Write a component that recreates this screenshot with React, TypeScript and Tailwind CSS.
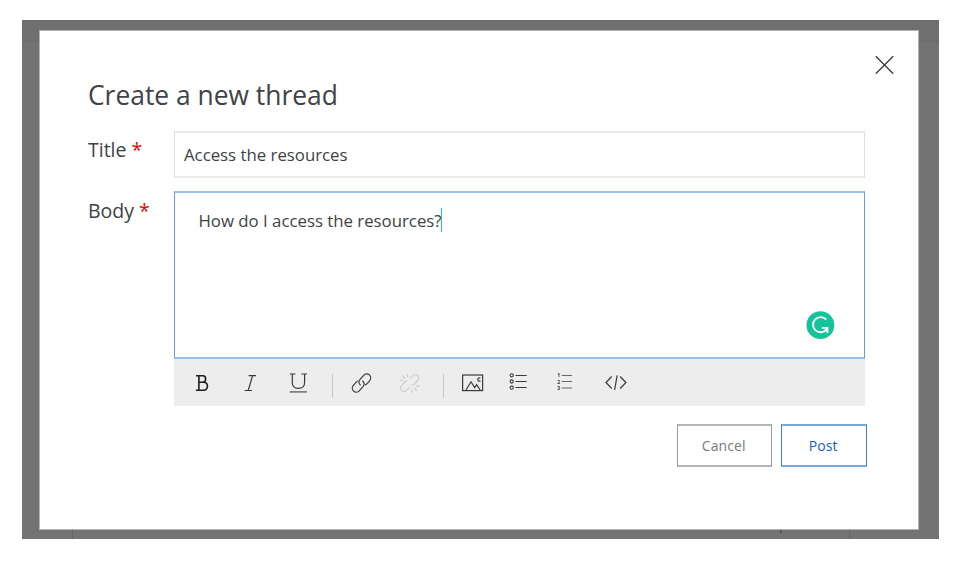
import React from "react";

type IconProps = { children: React.ReactNode; w: number; className?: string; label: string };

function ToolIcon({ children, w, className = "", label }: IconProps) {
  return (
    <button aria-label={label} className={"block h-6 shrink-0 " + className}>
      <svg width={w} height="24" viewBox={`0 0 ${w} 24`} fill="none" stroke="#3a3a3a" strokeWidth="1.1">
        {children}
      </svg>
    </button>
  );
}

function Toolbar() {
  return (
    <div className="flex h-[47px] w-[691px] items-start bg-[#ededed] pt-[12px]">
      <ToolIcon label="Bold" w={14} className="ml-[21px]">
        <path d="M1 4.8H7.8C11.6 4.8 11.6 11.2 7.8 11.2H4.2M7.8 11.2H8.6C13.7 11.2 13.7 19.2 8.6 19.2H1M3.9 4.8V19.2" stroke="#1f1f1f" strokeWidth="1.6" />
      </ToolIcon>
      <ToolIcon label="Italic" w={14} className="ml-[35px]">
        <path d="M4.6 4.6H12M.6 19.5H8M8.6 4.6L4.2 19.5" strokeWidth="1.2" />
      </ToolIcon>
      <ToolIcon label="Underline" w={18} className="ml-[31px]">
        <path d="M.9 3H6.4M12.4 3H18M3.3 3V11.5C3.3 15.3 5.6 17.4 9.4 17.4S15.6 15.3 15.6 11.5V3" strokeWidth="1.2" />
        <path d="M.7 20.9H18" stroke="#777" strokeWidth="1.6" />
      </ToolIcon>
      <span className="mt-[3px] ml-[25px] h-6 w-px bg-[#c8c8c8]" />
      <ToolIcon label="Insert link" w={21} className="ml-[18px]">
        <g strokeWidth="1.2" transform="translate(.4 0)">
          <path d="M9.2 14.2C7 12.6 7 10 8.7 8.3L12.3 4.3C13.9 2.5 16.4 2.4 18 3.9S19.7 8 18.2 9.8L15.4 12.8C14.9 13.3 14.3 13.7 13.6 13.9" />
          <path d="M11 9.7C13.2 11.3 13.2 14 11.6 15.7L7.9 19.8C6.3 21.5 3.8 21.6 2.2 20.1S.5 16 2 14.3L4.9 11.1C5.4 10.6 6 10.2 6.6 10" />
        </g>
      </ToolIcon>
      <ToolIcon label="Remove link" w={22} className="ml-[27px]">
        <g stroke="#cdcdcd" strokeWidth="1.2">
          <path d="M11 7.7L13.7 4.8C15 3.2 17.2 3.1 18.6 4.4S20 8 18.6 9.5L15.2 13.1C14.4 13.9 13.5 14.1 12.6 13.8" />
          <path d="M8.4 10.2C7.4 9.8 6.5 10.2 5.7 11L2.6 14.4C1.1 15.9 1.2 18.2 2.6 19.6S6.2 20.9 7.6 19.4L10.5 16.4" />
          <path d="M8 2.5L8.8 6.2M3.2 4.2L6.1 7.5M.9 9L4.5 9.5M17 14.7L20.6 15.3M15.1 17L18.1 20M12.5 18.3L13.2 21.6" />
        </g>
      </ToolIcon>
      <span className="mt-[3px] ml-[22px] h-6 w-px bg-[#c8c8c8]" />
      <ToolIcon label="Insert image" w={22} className="ml-[18px]">
        <rect x=".6" y="4" width="20" height="15.6" strokeWidth="1.2" />
        <path d="M4 19L9 10.8L12.7 16.6L14.6 13.7L18.2 19M18.4 7.3C17.3 6.4 15.8 7 15.8 8.5S17.3 10.6 18.4 9.7" strokeWidth="1.2" />
      </ToolIcon>
      <ToolIcon label="Bulleted list" w={18} className="ml-[25px]">
        <circle cx="2.7" cy="4.3" r="1.6" />
        <circle cx="2.7" cy="10.5" r="1.6" />
        <circle cx="2.7" cy="16.7" r="1.6" />
        <path d="M6.5 4.5H17.6M6.5 10.5H17.6M6.5 16.5H17.6" />
      </ToolIcon>
      <ToolIcon label="Numbered list" w={16} className="ml-[30px]">
        <g fill="#333" stroke="none" fontFamily="Open Sans, sans-serif" fontSize="5" fontWeight="700">
          <text x=".2" y="6.4">1</text>
          <text x=".2" y="12.8">2</text>
          <text x=".2" y="19.2">3</text>
        </g>
        <path d="M4.8 4.5H15M4.8 10.5H15M4.8 17H15" stroke="#666" />
      </ToolIcon>
      <ToolIcon label="Code" w={22} className="ml-[32px]">
        <path d="M6.7 5.5L1 11.5L6.7 17.5M15.2 5.5L20.9 11.5L15.2 17.5M12.2 4.4L9.6 18.8" strokeWidth="1.2" />
      </ToolIcon>
    </div>
  );
}

function AssistantBadge() {
  return (
    <svg className="absolute right-[29px] bottom-[17px]" width="29" height="29" viewBox="0 0 29 29" fill="none">
      <circle cx="14.4" cy="14.2" r="13.9" fill="#15c39a" />
      <path d="M20.2 8.5A7.6 7.6 0 1 0 20.6 18.4M15.8 16.9H21.4V22" stroke="#fff" strokeWidth="1.9" />
    </svg>
  );
}

function Label({ children }: { children: React.ReactNode }) {
  return (
    <label className="w-[86px] shrink-0 text-[19.5px] leading-[26px]">
      {children} <span className="text-[#d9090c]">*</span>
    </label>
  );
}

export default function App() {
  return (
    <div className="h-[573px] w-[980px] overflow-hidden bg-white pt-[20px] pl-[22px] font-['Open_Sans',sans-serif] text-[#404245]">
      <div className="relative h-[519px] w-[917px] overflow-hidden bg-[#737373] pt-[10px] pl-[17px]">
        <div className="absolute inset-x-0 top-0 h-[23px] bg-[#6f6f6f]" />
        <div className="absolute top-[500px] left-[50px] h-[19px] w-[778px] border-x border-[#646464]" />
        <div className="absolute top-[494px] left-[692px] flex gap-[16px] text-[14px] leading-[20px] text-[#484848]">
          <span>None</span>
          <span>replies</span>
        </div>
        <section className="relative h-[500px] w-[880px] border border-white/47 bg-white bg-clip-padding pt-[43px] pl-[48px]">
          <button aria-label="Close" className="absolute top-[24px] right-[24px]">
            <svg className="block" width="19" height="19" viewBox="0 0 19 19" stroke="#33373b" strokeWidth="1.3">
              <path d="M.8 1.3L18.2 18.7M18.2 1.3L.8 18.7" />
            </svg>
          </button>
          <h1 className="h-[57px] text-[26.4px] leading-[42px]">Create a new thread</h1>
          <div className="flex">
            <Label><span className="inline-block pt-[6px]">Title</span></Label>
            <div className="flex h-[47px] w-[691px] items-center border-x border-y-2 border-x-[#dedede] border-y-[#ececec] pl-[9px] text-[16.8px]">
              Access the resources
            </div>
          </div>
          <div className="mt-[13px] flex">
            <Label><span className="inline-block pt-[7px]">Body</span></Label>
            <div>
              <div className="relative flex h-[168px] w-[691px] items-start border-x border-y-2 border-x-[#5f9fe0] border-y-[#98c0ee] pt-[15px] pl-[23.5px] text-[16.8px] leading-[26px]">
                How do I access the resources?
                <span className="relative -ml-px h-6 w-px shrink-0 bg-[#27c9a8]" />
                <AssistantBadge />
              </div>
              <Toolbar />
            </div>
          </div>
          <div className="mt-[18px] mr-[51px] flex justify-end gap-[9px] text-[14px]">
            <button className="h-[43px] w-[95px] border-x border-y-2 border-x-[#999] border-y-[#b5b5b5] pr-[1.5px] tracking-[0.1px] text-[#77797b]">Cancel</button>
            <button className="h-[43px] w-[86px] border-x border-y-2 border-x-[#3a80cd] border-y-[#7ba8dc] pr-[1.5px] tracking-[0.1px] text-[#1560bd]">Post</button>
          </div>
        </section>
      </div>
    </div>
  );
}
